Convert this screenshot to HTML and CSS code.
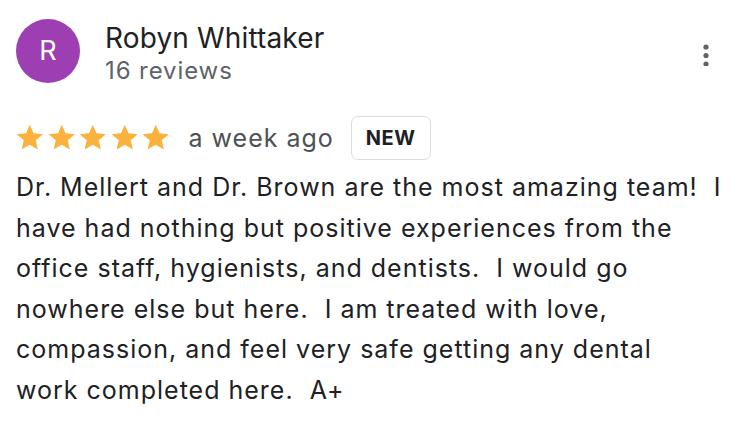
FILE: index.html
```html
<!DOCTYPE html>
<html lang="en">
<head>
  <meta charset="UTF-8">
  <title>Review</title>
  <link rel="stylesheet" href="styles.css">
</head>
<body>

<div class="review">
  <!-- Reviewer -->
  <div class="review-header">
    <div class="avatar">R</div>
    <div class="reviewer">
      <div class="reviewer-name">Robyn Whittaker</div>
      <div class="reviewer-count">16 reviews</div>
    </div>
    <button class="more-btn" aria-label="More">
      <svg width="24" height="24" viewBox="0 0 24 24"><circle cx="12" cy="5" r="2.6"/><circle cx="12" cy="13.5" r="2.6"/><circle cx="12" cy="22" r="2.6"/></svg>
    </button>
  </div>

  <!-- Rating -->
  <div class="review-meta">
    <div class="stars">
      <svg viewBox="0 0 24 24"><path d="M12 17.27L18.18 21l-1.64-7.03L22 9.24l-7.19-.61L12 2 9.19 8.63 2 9.24l5.46 4.73L5.82 21z"/></svg>
      <svg viewBox="0 0 24 24"><path d="M12 17.27L18.18 21l-1.64-7.03L22 9.24l-7.19-.61L12 2 9.19 8.63 2 9.24l5.46 4.73L5.82 21z"/></svg>
      <svg viewBox="0 0 24 24"><path d="M12 17.27L18.18 21l-1.64-7.03L22 9.24l-7.19-.61L12 2 9.19 8.63 2 9.24l5.46 4.73L5.82 21z"/></svg>
      <svg viewBox="0 0 24 24"><path d="M12 17.27L18.18 21l-1.64-7.03L22 9.24l-7.19-.61L12 2 9.19 8.63 2 9.24l5.46 4.73L5.82 21z"/></svg>
      <svg viewBox="0 0 24 24"><path d="M12 17.27L18.18 21l-1.64-7.03L22 9.24l-7.19-.61L12 2 9.19 8.63 2 9.24l5.46 4.73L5.82 21z"/></svg>
    </div>
    <span class="review-date">a week ago</span>
    <span class="badge">NEW</span>
  </div>

  <p class="review-text">Dr. Mellert and Dr. Brown are the most amazing team!  I have had nothing but positive experiences from the office staff, hygienists, and dentists.  I would go nowhere else but here.  I am treated with love, compassion, and feel very safe getting any dental work completed here.  A+</p>
</div>

</body>
</html>
```

FILE: styles.css
```css
body {
  margin: 0;
  background-color: #fff;
  font-family: Inter, "Open Sans", Roboto, sans-serif;
  color: #202124;
}
.review {
  padding: 19px 16px 0 16px;
}
.review-header {
  display: flex;
  align-items: flex-start;
}
.avatar {
  width: 64px;
  height: 64px;
  border-radius: 50%;
  background-color: #9d3fb2;
  color: #fff;
  font-size: 27px;
  line-height: 64px;
  text-align: center;
  flex-shrink: 0;
}
.reviewer {
  margin-left: 25px;
  flex: 1;
  padding-top: 1px;
}
.reviewer-name {
  font-size: 28px;
  line-height: 36px;
  letter-spacing: 0.15px;
  color: #202124;
}
.reviewer-count {
  font-size: 24px;
  line-height: 30px;
  letter-spacing: 0.9px;
  color: #5f6368;
}
.more-btn {
  background: none;
  border: none;
  padding: 0;
  margin: 21px 6px 0 0;
  width: 24px;
  height: 30px;
  fill: #5f6368;
  cursor: pointer;
}
.review-meta {
  display: flex;
  align-items: center;
  margin-top: 30px;
}
.stars {
  display: flex;
  margin-left: -2px;
}
.stars svg {
  width: 31.5px;
  height: 31.5px;
  fill: #fbb23c;
}
.review-date {
  margin-left: 17px;
  font-size: 25px;
  letter-spacing: 1px;
  color: #4d5156;
}
.badge {
  margin-left: 17px;
  border: 1px solid #dadce0;
  border-radius: 7px;
  padding: 0 14px;
  height: 42px;
  line-height: 42px;
  font-size: 20px;
  font-weight: bold;
  letter-spacing: 0.5px;
  color: #202124;
}
.review-text {
  margin: 7px 0 0 0;
  font-size: 25px;
  line-height: 40.5px;
  letter-spacing: 1px;
  white-space: pre-wrap;
  max-width: 706px;
}
```
